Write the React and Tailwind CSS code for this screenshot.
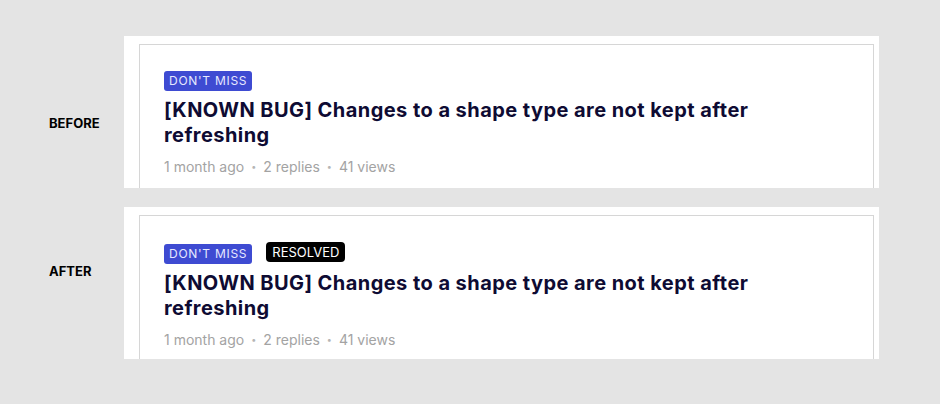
import React from 'react';

const font = { fontFamily: 'Inter, "Noto Sans", sans-serif' };

function Meta() {
  return (
    <div className="mt-[9px] flex items-center text-[14px] leading-[20px] text-[#a3a3a3]">
      <span>1 month ago</span>
      <span className="mx-[7px] text-[9px] text-[#b5b5b5]">•</span>
      <span>2 replies</span>
      <span className="mx-[7px] text-[9px] text-[#b5b5b5]">•</span>
      <span>41 views</span>
    </div>
  );
}

function Topic({ resolved }) {
  return (
    <div className="h-[152px] w-[755px] bg-white pt-[8px] pl-[15px] pr-[5px]">
      <div className="h-full border border-b-0 border-[#d6d6d6] px-[24px] pt-[26px]">
        <div className="flex items-end gap-[14px]">
          <span className="rounded-[3px] bg-[#3e4bd2] px-[5px] text-[12px] leading-[20px] tracking-[0.06em] text-[#e6e8ff]">
            DON&apos;T MISS
          </span>
          {resolved && (
            <span className="mb-[2px] rounded-[4px] bg-black px-[6px] text-[13px] leading-[20px] text-white">
              RESOLVED
            </span>
          )}
        </div>
        <h2 className="mt-[7px] max-w-[640px] text-[20px] font-bold leading-[25px] tracking-[0.022em] text-[#0e0b33]">
          [KNOWN BUG] Changes to a shape type are not kept after refreshing
        </h2>
        <Meta />
      </div>
    </div>
  );
}

export default function App() {
  return (
    <div className="min-h-screen bg-[#e4e4e4] pt-[36px]" style={font}>
      <div className="flex items-start">
        <div className="w-[124px] pl-[49px] pt-[80px] text-[13px] font-bold leading-[14px] text-black">BEFORE</div>
        <Topic />
      </div>
      <div className="mt-[19px] flex items-start">
        <div className="w-[124px] pl-[49px] pt-[57px] text-[13px] font-bold leading-[14px] text-black">AFTER</div>
        <Topic resolved />
      </div>
    </div>
  );
}
